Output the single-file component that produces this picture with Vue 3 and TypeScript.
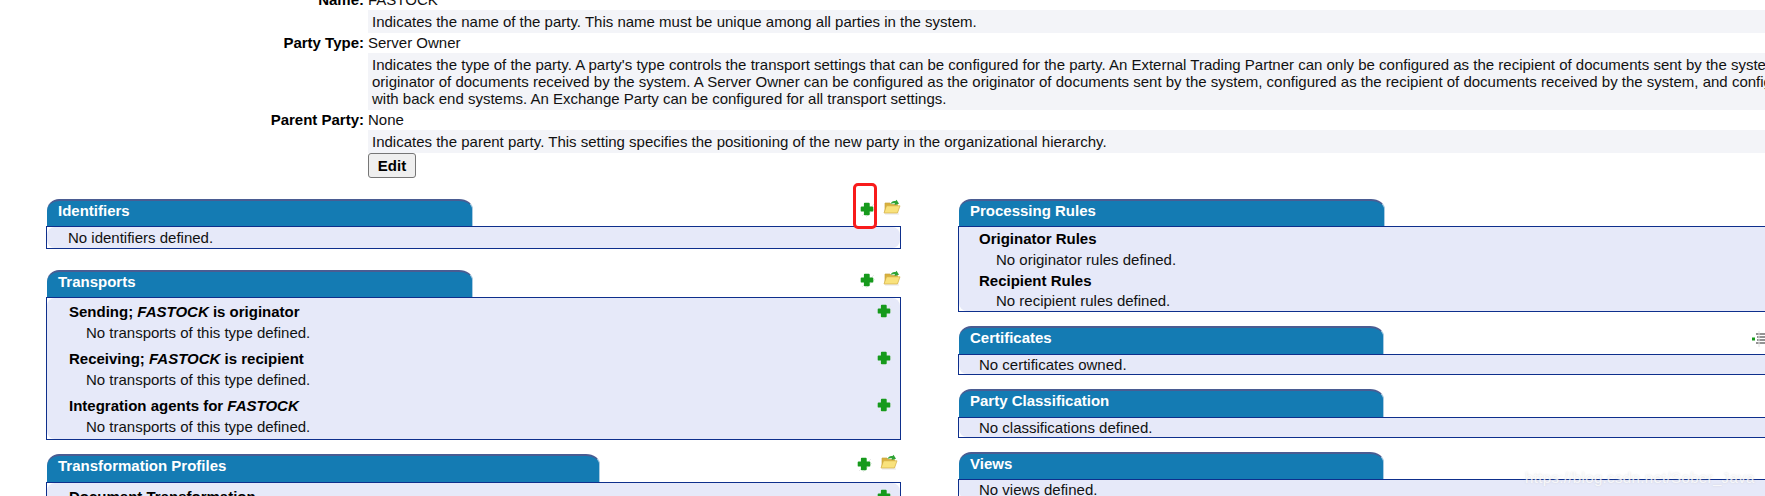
<script setup lang="ts">
interface Group {
  title?: string
  owner?: string
  text: string
  add?: boolean
}

interface Panel {
  title: string
  tabWidth: number
  tabHeight: number
  tools: 'both' | 'indent' | 'none'
  toolsLeft?: number
  groups: Group[]
}

const noTransports = 'No transports of this type defined.'

const leftPanels: Panel[] = [
  {
    title: 'Identifiers',
    tabWidth: 426,
    tabHeight: 27,
    tools: 'both',
    toolsLeft: 813,
    groups: [{ text: 'No identifiers defined.' }]
  },
  {
    title: 'Transports',
    tabWidth: 426,
    tabHeight: 27,
    tools: 'both',
    toolsLeft: 813,
    groups: [
      { title: 'Sending; ', owner: ' is originator', text: noTransports, add: true },
      { title: 'Receiving; ', owner: ' is recipient', text: noTransports, add: true },
      { title: 'Integration agents for ', owner: '', text: noTransports, add: true }
    ]
  },
  {
    title: 'Transformation Profiles',
    tabWidth: 553,
    tabHeight: 28,
    tools: 'both',
    toolsLeft: 810,
    groups: [{ title: 'Document Transformation', text: 'No profiles defined.', add: true }]
  }
]

const rightPanels: Panel[] = [
  {
    title: 'Processing Rules',
    tabWidth: 426,
    tabHeight: 27,
    tools: 'none',
    groups: [
      { title: 'Originator Rules', text: 'No originator rules defined.' },
      { title: 'Recipient Rules', text: 'No recipient rules defined.' }
    ]
  },
  {
    title: 'Certificates',
    tabWidth: 425,
    tabHeight: 28,
    tools: 'indent',
    groups: [{ text: 'No certificates owned.' }]
  },
  {
    title: 'Party Classification',
    tabWidth: 425,
    tabHeight: 28,
    tools: 'none',
    groups: [{ text: 'No classifications defined.' }]
  },
  {
    title: 'Views',
    tabWidth: 425,
    tabHeight: 27,
    tools: 'none',
    groups: [{ text: 'No views defined.' }]
  }
]

const columns = [
  { key: 'left', panels: leftPanels },
  { key: 'right', panels: rightPanels }
]
</script>

<template>
  <div class="page">
    <svg class="defs" aria-hidden="true">
      <symbol id="plus" viewBox="0 0 16 16">
        <path d="M3 15 15 3M7 16 16 7" stroke="#e8e8e8" fill="none" />
        <path
          d="M5.8 1.8h4c.6 0 .9.3.9.9v2.7h2.7c.6 0 .9.3.9.9v3.4c0 .6-.3.9-.9.9h-2.7v2.7c0 .6-.3.9-.9.9h-4c-.6 0-.9-.3-.9-.9v-2.7H2.6c-.6 0-.9-.3-.9-.9V6.300c0-.6.3-.9.9-.9h2.300V2.700c0-.6.3-.9.9-.9z"
          fill="#169a1c"
        />
      </symbol>
      <symbol id="folder" viewBox="0 0 18 16">
        <path d="M2 15 16 15" stroke="#e4e4e4" />
        <path d="M2 4h5l1 1.500h6.500V13H2z" fill="#d9b03c" stroke="#c9a63f" stroke-width=".7" />
        <path d="M1 14 3.500 6.800h13.500L14.500 14z" fill="#f9e27c" stroke="#d2ad45" stroke-width=".7" />
        <path d="M7.500 5c.8-2.500 2.800-3.500 5-3l1-1.200 2.500 4-4.500 1.200.6-1.500c-1.500-.6-3.300-.3-4.600.5z" fill="#2fa336" />
      </symbol>
    </svg>

    <section class="details">
      <div class="label">Name:</div>
      <div class="value">FASTOCK</div>
      <div class="help">Indicates the name of the party. This name must be unique among all parties in the system.</div>

      <div class="label">Party Type:</div>
      <div class="value">Server Owner</div>
      <div class="help">
        Indicates the type of the party. A party's type controls the transport settings that can be configured for the party. An External Trading Partner can only be configured as the recipient of documents sent by the system and as the<br />
        originator of documents received by the system. A Server Owner can be configured as the originator of documents sent by the system, configured as the recipient of documents received by the system, and configured to exchange documents<br />
        with back end systems. An Exchange Party can be configured for all transport settings.
      </div>

      <div class="label">Parent Party:</div>
      <div class="value">None</div>
      <div class="help">Indicates the parent party. This setting specifies the positioning of the new party in the organizational hierarchy.</div>

      <div class="actions"><button type="button" class="edit">Edit</button></div>
    </section>

    <div class="columns">
      <div v-for="column in columns" :key="column.key" :class="['column', column.key]">
        <section v-for="panel in column.panels" :key="panel.title" class="panel">
          <header class="panel-head">
            <h2 class="tab" :style="{ width: panel.tabWidth + 'px', height: panel.tabHeight + 'px' }">{{ panel.title }}</h2>
            <div v-if="panel.tools === 'both'" class="tools" :style="{ left: panel.toolsLeft + 'px' }">
              <svg class="icon"><use href="#plus" /></svg>
              <svg class="icon folder"><use href="#folder" /></svg>
            </div>
            <div v-else-if="panel.tools === 'indent'" class="indent">
              <svg viewBox="0 0 18 16" width="18" height="16">
                <path d="M2 8h3" stroke="#169a1c" stroke-width="3" />
                <path d="M6 3h11M7 6h9M7 9h9M6 12h11" stroke="#707070" stroke-width="1.4" />
                <path d="M9 0v16" stroke="#e2e2e2" />
              </svg>
            </div>
          </header>
          <div class="panel-body">
            <div v-for="(group, i) in panel.groups" :key="i" :class="['group', { titled: group.title }]">
              <div v-if="group.title" class="group-title">
                <span>{{ group.title }}<em v-if="group.owner !== undefined">FASTOCK</em>{{ group.owner }}</span>
                <svg v-if="group.add" class="icon add"><use href="#plus" /></svg>
              </div>
              <div class="group-text">{{ group.text }}</div>
            </div>
          </div>
        </section>
      </div>
    </div>

    <div class="marker"></div>
    <div class="watermark">https://blog.csdn.net/Sober_Java</div>
  </div>
</template>

<style>
html,
body {
  margin: 0;
  background: #fff;
  overflow: hidden;
}
</style>

<style scoped>
.page {
  position: relative;
  width: 1765px;
  height: 496px;
  overflow: hidden;
  font-family: "Liberation Sans", Arial, sans-serif;
  font-size: 15px;
  line-height: 17px;
  color: #111;
}

.defs {
  position: absolute;
  width: 0;
  height: 0;
}

.details {
  display: grid;
  grid-template-columns: 364px 1397px;
  column-gap: 4px;
  margin-top: -10px;
}

.label {
  grid-column: 1;
  height: 20px;
  line-height: 20px;
  text-align: right;
  font-weight: 700;
  color: #000;
}

.value {
  grid-column: 2;
  height: 20px;
  line-height: 20px;
}

.help {
  grid-column: 2;
  padding: 3px 0 3px 4px;
  background: #f3f4f8;
  white-space: nowrap;
  overflow: hidden;
}

.actions {
  grid-column: 2;
}

.edit {
  display: block;
  width: 48px;
  height: 25px;
  padding: 0;
  font: 700 15px "Liberation Sans", Arial, sans-serif;
  color: #000;
  background: #efefef;
  border: 1px solid #767676;
  border-radius: 3px;
}

.columns {
  display: grid;
  grid-template-columns: 855px 900px;
  column-gap: 57px;
  margin: 21px 0 0 46px;
}

.column {
  display: flex;
  flex-direction: column;
  gap: 14px;
}

.left .panel:first-child {
  margin-bottom: 7px;
}

.panel-head {
  position: relative;
  display: flex;
  align-items: flex-end;
}

.tab {
  box-sizing: border-box;
  margin: 0 0 0 1px;
  padding: 1px 0 0 11px;
  font-size: 15px;
  line-height: 17px;
  font-weight: 700;
  color: #fff;
  background: #147bb3;
  border-top: 2px solid #4a5c92;
  border-right: 1px solid #a9cbe2;
  border-radius: 12px 14px 0 0 / 12px 10px 0 0;
}

.tools {
  position: absolute;
  top: 2px;
  display: flex;
  align-items: flex-start;
  gap: 8px;
}

.icon {
  display: block;
  width: 16px;
  height: 16px;
}

.folder {
  width: 18px;
  margin-top: -2px;
}

.indent {
  position: absolute;
  left: 792px;
  top: 5px;
}

.panel-body {
  box-sizing: border-box;
  border: 1px solid #0e2f8c;
  background: #fff;
}

.group {
  background: #e6e9f9;
  padding-left: 21px;
}

.group:last-child {
  border-radius: 0 0 0 8px;
}

.left .group:first-child {
  border-radius: 8px 8px 0 0;
}

.left .group:only-child {
  border-radius: 8px;
}

.left .group.titled {
  padding: 2px 0 1px 22px;
}

.right .group {
  padding-left: 20px;
}

.right .group.titled:first-child {
  padding-top: 1px;
}

.group-title {
  display: flex;
  justify-content: space-between;
  align-items: center;
  font-weight: 700;
  color: #000;
  height: 21px;
}

.left .group-title {
  height: 22px;
}

.group-title em {
  font-style: italic;
}

.group-text {
  line-height: 21px;
}

.right .group-text {
  line-height: 19px;
}

.right .titled .group-text {
  line-height: 21px;
}

.right .titled:last-child .group-text {
  line-height: 20px;
}

.titled .group-text {
  padding-left: 17px;
}

.left .titled .group-text {
  line-height: 22px;
}

.add {
  margin-right: 8px;
}

.marker {
  position: absolute;
  left: 853px;
  top: 183px;
  box-sizing: border-box;
  width: 24px;
  height: 46px;
  border: 3px solid #f81b1b;
  border-radius: 5px;
}

.watermark {
  position: absolute;
  left: 1525px;
  top: 468px;
  font-size: 15px;
  line-height: 20px;
  letter-spacing: 0.35px;
  color: rgba(255, 255, 255, 0.8);
  text-shadow: 0 0 2px rgba(170, 170, 170, 0.4);
  white-space: nowrap;
}
</style>
